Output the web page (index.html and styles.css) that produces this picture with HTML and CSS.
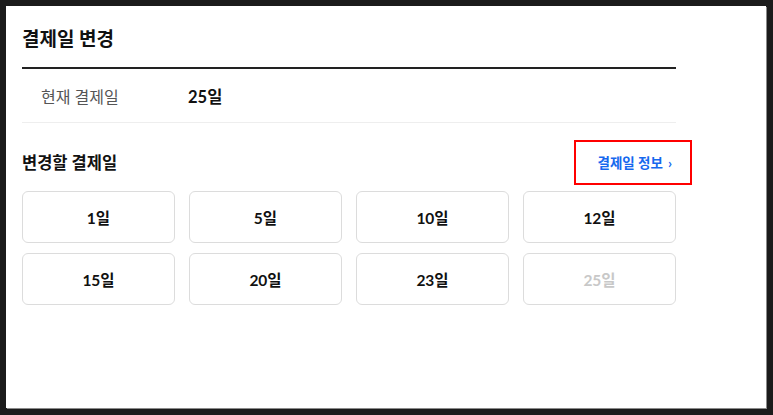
FILE: index.html
```html
<!DOCTYPE html>
<html lang="ko">
<head>
<meta charset="utf-8">
<title>결제일 변경</title>
<link rel="stylesheet" href="styles.css">
</head>
<body>
<div class="panel">
  <div class="content">
    <h1 class="title">결제일 변경</h1>
    <div class="current">
      <span class="current-label">현재 결제일</span>
      <span class="current-value">25일</span>
    </div>
    <div class="sub-head">
      <h2 class="sub-title">변경할 결제일</h2>
      <a class="info-link" href="#">결제일 정보<span class="chev">›</span></a>
    </div>
    <div class="days">
      <button class="day">1일</button>
      <button class="day">5일</button>
      <button class="day">10일</button>
      <button class="day">12일</button>
      <button class="day">15일</button>
      <button class="day">20일</button>
      <button class="day">23일</button>
      <button class="day is-disabled" disabled>25일</button>
    </div>
  </div>
</div>
</body>
</html>
```

FILE: styles.css
```css
* { box-sizing: border-box; }
html, body { margin: 0; padding: 0; }
body {
  background: #1b1b1b;
  padding: 6px 7px 7px 6px;
  font-family: Lato, "Noto Sans CJK KR", sans-serif;
  color: #111;
}
.panel {
  width: 760px;
  height: 402px;
  background: #fff;
  box-shadow: 1px 1px 0 #8a8a8a;
  padding: 19px 0 0 16px;
}
.content {
  width: 654px;
}
.title {
  margin: 0;
  font-size: 19px;
  line-height: 28px;
  font-weight: 700;
  padding-bottom: 14px;
  border-bottom: 2px solid #222;
}
.current {
  display: flex;
  align-items: center;
  height: 54px;
  border-bottom: 1px solid #eeeeee;
  padding-left: 19px;
}
.current-label {
  width: 147px;
  font-size: 16px;
  color: #555;
}
.current-value {
  font-size: 16.5px;
  font-weight: 700;
  color: #111;
}
.sub-head {
  display: flex;
  align-items: center;
  justify-content: space-between;
  height: 45px;
  margin-top: 17px;
}
.sub-title {
  margin: 0;
  font-size: 16.5px;
  font-weight: 700;
  line-height: 22px;
}
.info-link {
  position: relative;
  display: flex;
  align-items: center;
  font-size: 13.5px;
  line-height: 18px;
  font-weight: 700;
  color: #1668ee;
  text-decoration: none;
  margin-right: 4px;
}
.chev {
  margin-left: 5px;
  font-size: 14px;
}
.info-link::after {
  content: "";
  position: absolute;
  top: -14px;
  bottom: -13px;
  left: -24px;
  right: -20px;
  border: 2px solid #ff0000;
}
.days {
  margin-top: 6px;
  display: grid;
  grid-template-columns: repeat(4, 1fr);
  grid-auto-rows: 52px;
  column-gap: 14px;
  row-gap: 10px;
}
.day {
  border: 1px solid #dcdcdc;
  border-radius: 6px;
  background: #fff;
  font-family: inherit;
  font-size: 15.5px;
  font-weight: 700;
  color: #111;
  padding: 0;
}
.day.is-disabled {
  color: #c8c8c8;
}
```
